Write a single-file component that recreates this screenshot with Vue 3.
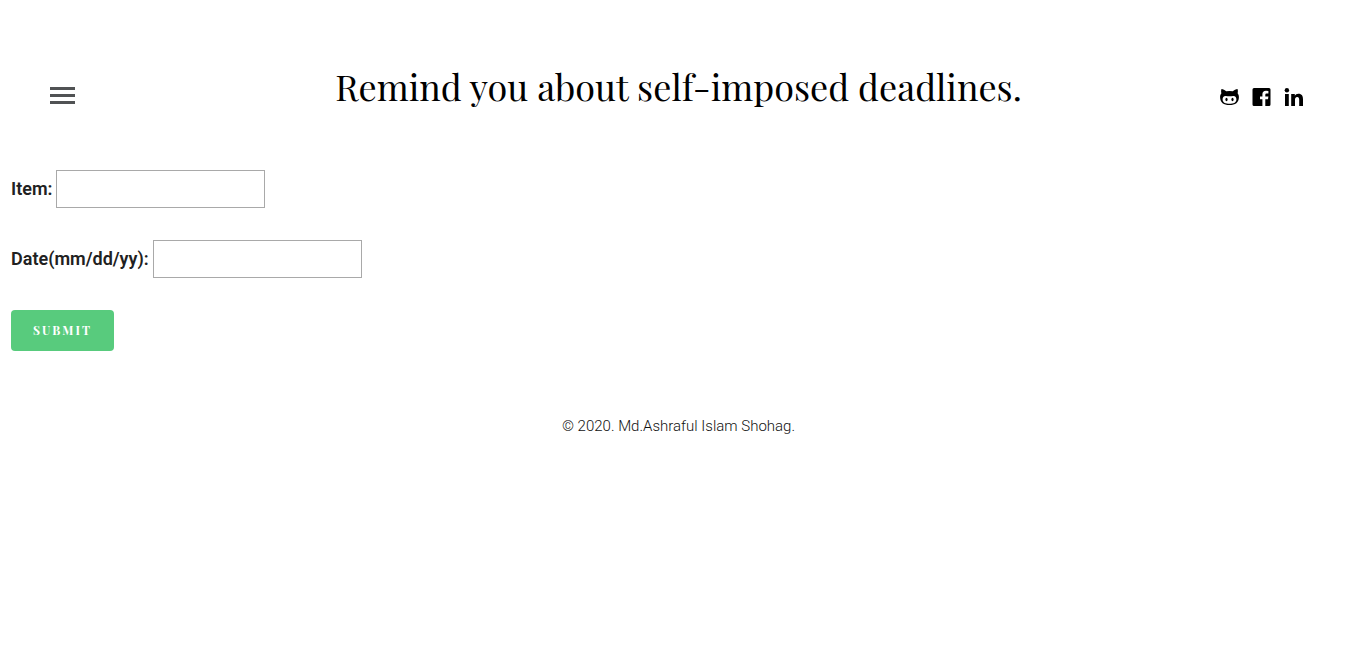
<script setup>
import { ref } from 'vue'

const item = ref('')
const date = ref('')
</script>

<template>
  <div class="page">
    <header class="header">
      <button class="menu" type="button" aria-label="Menu">
        <span class="bar"></span>
        <span class="bar"></span>
        <span class="bar"></span>
      </button>
      <h1 class="title">Remind you about self-imposed deadlines.</h1>
      <nav class="social" aria-label="Social links">
        <a href="#github" aria-label="GitHub">
          <svg viewBox="0 0 20 20" width="20" height="20">
            <path fill-rule="evenodd" d="M1.500 2C3 2 5 3.200 6.200 4.200Q9.500 3.600 12.800 4.200C14 3.200 16 2 17.500 2C18 3.500 18 5 17.600 6.300C18.600 7.500 19 8.800 18.900 10.500C18.700 15.500 15.500 18 9.500 18S.3 15.500.1 10.500C0 8.800.4 7.500 1.400 6.300C1 5 1 3.500 1.500 2ZM5.800 8.900C3.600 8.800 2.500 10.500 2.600 12.500C2.800 15.800 5.500 16.800 9.500 16.800S16.200 15.800 16.400 12.500C16.500 10.500 15.400 8.800 13.200 8.900C11.800 9 10.800 9.200 9.500 9.200S7.200 9 5.800 8.900Z" />
            <ellipse cx="6.500" cy="12.500" rx="1.100" ry="1.700" />
            <ellipse cx="12.500" cy="12.500" rx="1.100" ry="1.700" />
          </svg>
        </a>
        <a href="#facebook" aria-label="Facebook">
          <svg viewBox="0 0 20 20" width="20" height="20">
            <path d="M2 1H17Q18.500 1 18.500 2.500V17.500Q18.500 19 17 19H13.300V12.300H16L16.400 9.500H13.300V7.700Q13.300 6.500 14.500 6.500H16.400V3.900L14 3.800Q10.400 3.800 10.400 7.300V9.500H8V12.300H10.400V19H2Q.5 19 .5 17.500V2.500Q.5 1 2 1Z" />
          </svg>
        </a>
        <a href="#linkedin" aria-label="LinkedIn">
          <svg viewBox="0 0 20 20" width="20" height="20">
            <circle cx="2.900" cy="3.200" r="2.200" />
            <path d="M1 7H4.800V19H1ZM7.200 7H10.800V8.700C11.500 7.400 12.700 6.700 14.300 6.700C18 6.700 19 9 19 12.300V19H15.200V13C15.200 11.200 14.900 9.900 13.200 9.900C11.400 9.900 11 11.300 11 12.900V19H7.200Z" />
          </svg>
        </a>
      </nav>
    </header>

    <form class="form" @submit.prevent>
      <div class="field">
        <label for="item">Item:</label>
        <input id="item" v-model="item" type="text" />
      </div>
      <div class="field">
        <label for="date">Date(mm/dd/yy):</label>
        <input id="date" v-model="date" type="text" />
      </div>
      <button class="submit" type="submit">SUBMIT</button>
    </form>

    <footer class="footer">© 2020. Md.Ashraful Islam Shohag.</footer>
  </div>
</template>

<style>
body {
  margin: 0;
  background: #fff;
}
</style>

<style scoped>
.page {
  padding: 58px 0 0 11px;
  color: #111;
  font-family: Roboto, "Liberation Sans", sans-serif;
}

.header {
  display: grid;
  grid-template-columns: 1fr auto 1fr;
  align-items: center;
  height: 56px;
  margin-bottom: 56px;
}

.menu {
  display: flex;
  flex-direction: column;
  justify-self: start;
  gap: 4px;
  margin: 18px 0 0 39px;
  padding: 0;
  border: 0;
  background: none;
  cursor: pointer;
}

.bar {
  width: 25px;
  height: 3px;
  background: #505254;
}

.title {
  margin: 0;
  color: #000;
  font-family: "Playfair Display", "Liberation Serif", serif;
  font-size: 36px;
  font-weight: 400;
  line-height: 56px;
  white-space: nowrap;
}

.social {
  display: flex;
  justify-self: end;
  gap: 12px;
  margin: 22px 42px 0 0;
}

.social a {
  display: block;
  height: 20px;
  color: #000;
}

.social svg {
  display: block;
  fill: currentColor;
}

.form {
  display: flex;
  flex-direction: column;
  align-items: flex-start;
  gap: 32px;
}

.field {
  display: flex;
  align-items: center;
  gap: 4px;
}

.field label {
  color: #212121;
  font-size: 18px;
  font-weight: 600;
  line-height: 38px;
}

.field input {
  box-sizing: border-box;
  width: 209px;
  height: 38px;
  padding: 4px 8px;
  border: 1px solid #a9a9a9;
  border-radius: 0;
  background: #fff;
  font: inherit;
  font-size: 16px;
}

.submit {
  height: 41px;
  padding: 0 22px 2px;
  border: 0;
  border-radius: 4px;
  background: #58cb7d;
  color: #fff;
  font-family: "Playfair Display", "Liberation Serif", serif;
  font-size: 12px;
  font-weight: 700;
  letter-spacing: 2px;
  cursor: pointer;
}

.footer {
  margin-top: 64px;
  font-size: 15px;
  font-weight: 300;
  line-height: 22px;
  text-align: center;
}
</style>
